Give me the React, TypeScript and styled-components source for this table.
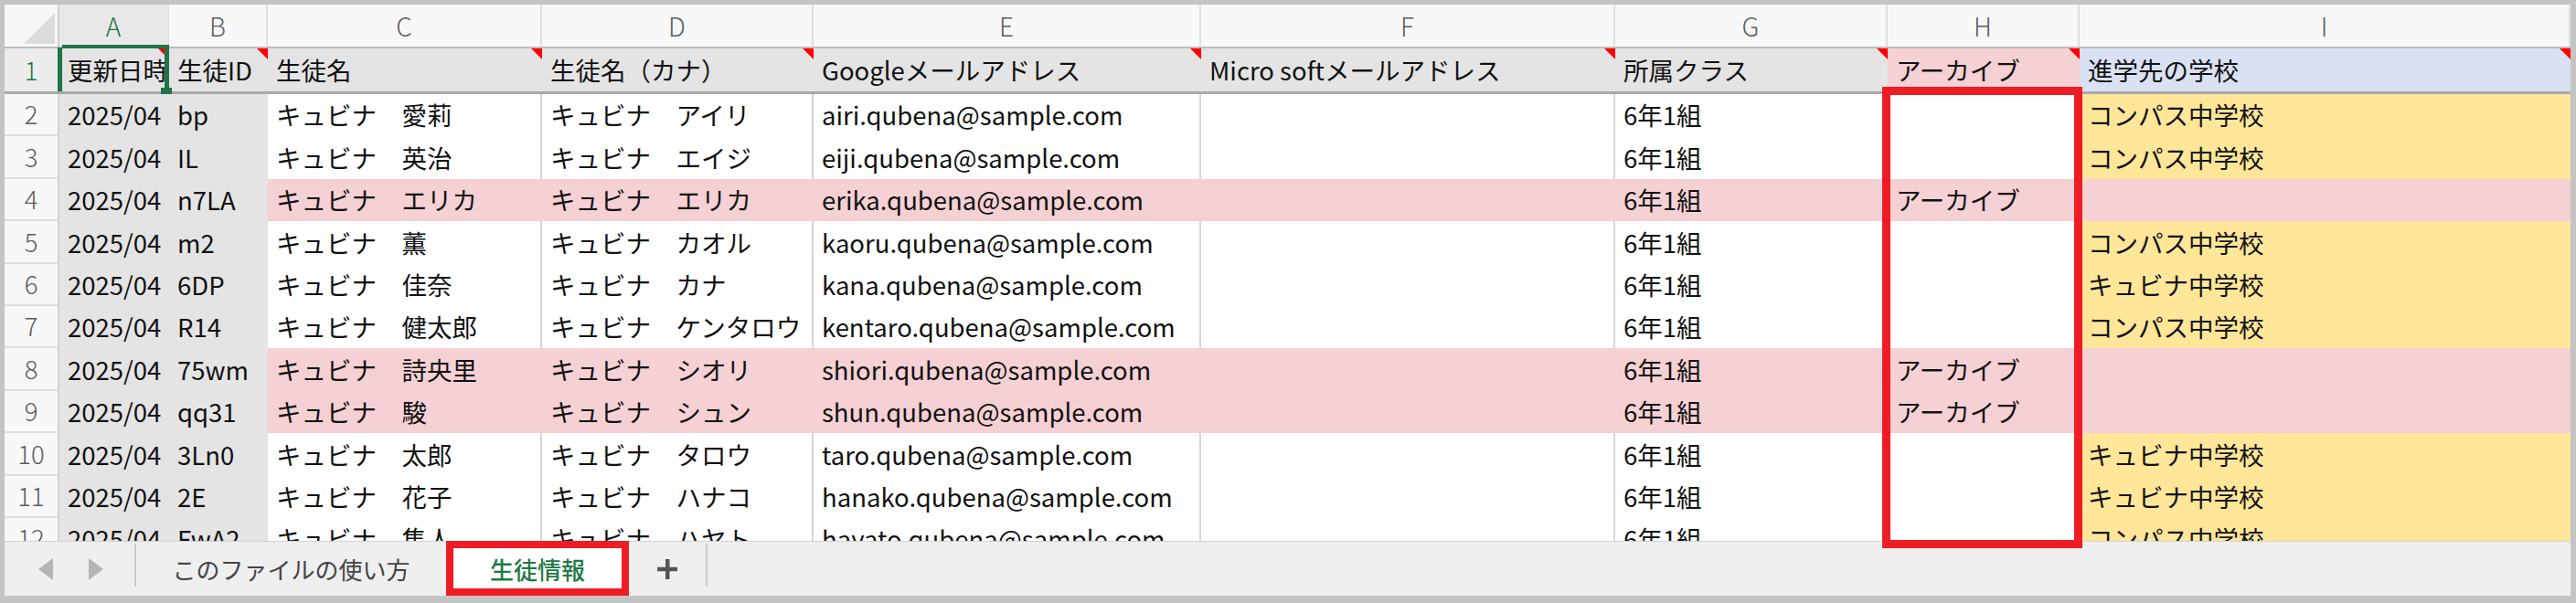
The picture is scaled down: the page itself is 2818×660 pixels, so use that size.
import React from 'react';
import styled, { createGlobalStyle } from 'styled-components';

const GlobalStyle = createGlobalStyle`
  html, body { margin: 0; padding: 0; background: #ffffff; }
  body { font-family: "Noto Sans CJK JP", "Noto Sans", sans-serif; }
  #root { width: 2818px; height: 660px; }
`;

const COLS = [60, 120, 108, 300, 297, 424, 453, 298, 210, 537];
const TEMPLATE = COLS.map((c) => `${c}px`).join(' ');

const GRAY = '#e4e4e4';
const PINK = '#f5d0d4';
const YELLOW = '#ffe699';
const BLUE = '#dae1f3';
const GRID = '#d6d6d6';
const GREEN = '#217346';
const RED_MARK = '#ee1c25';

const Page = styled.div`
  position: relative;
  width: 2818px;
  height: 660px;
`;

const Frame = styled.div`
  box-sizing: border-box;
  width: 100%;
  height: 100%;
  border: 5px solid #c4c4c4;
  border-right-width: 6px;
  border-bottom-width: 8px;
  display: flex;
  flex-direction: column;
  overflow: hidden;
  background: #ffffff;
`;

const Sheet = styled.div`
  flex: 1;
  min-height: 0;
  overflow: hidden;
  display: flex;
  flex-direction: column;
`;

const GridRow = styled.div<{ $h: number; $bottom: string; $bw: number }>`
  display: grid;
  grid-template-columns: ${TEMPLATE};
  height: ${(p) => p.$h}px;
  flex: none;
  box-sizing: border-box;
  border-bottom: ${(p) => p.$bw}px solid ${(p) => p.$bottom};
`;

const Corner = styled.div`
  position: relative;
  background: #f7f7f7;
  border-right: 2px solid #d2d2d2;
  &::after {
    content: '';
    position: absolute;
    right: 3px;
    bottom: 3px;
    width: 0;
    height: 0;
    border-bottom: 34px solid #dcdcdc;
    border-left: 34px solid transparent;
  }
`;

const ColHead = styled.div<{ $sel?: boolean }>`
  position: relative;
  box-sizing: border-box;
  display: flex;
  align-items: center;
  justify-content: center;
  background: ${(p) => (p.$sel ? '#e8e8e8' : '#f8f8f8')};
  border-right: 2px solid #e0e0e0;
  color: ${(p) => (p.$sel ? GREEN : '#5c5c5c')};
  font-size: 28px;
  font-weight: 300;
  line-height: 1;
  &::after {
    content: '';
    display: ${(p) => (p.$sel ? 'block' : 'none')};
    position: absolute;
    left: 3px;
    right: -2px;
    bottom: -2px;
    height: 4px;
    background: ${GREEN};
  }
`;

const RowHead = styled.div<{ $sel?: boolean; $line?: boolean }>`
  box-sizing: border-box;
  display: flex;
  align-items: center;
  justify-content: center;
  background: ${(p) => (p.$sel ? '#ececec' : '#f8f8f8')};
  border-right: 2px solid #d2d2d2;
  border-bottom: ${(p) => (p.$line ? '2px solid #dedede' : 'none')};
  color: ${(p) => (p.$sel ? GREEN : '#5c5c5c')};
  font-size: 27.5px;
  font-weight: 300;
  line-height: 1;
`;

const Cell = styled.div<{ $bg?: string }>`
  position: relative;
  box-sizing: border-box;
  display: flex;
  align-items: center;
  padding-left: 9px;
  background: ${(p) => p.$bg || '#ffffff'};
  border-right: 2px solid ${(p) => p.$bg || GRID};
  color: #111111;
  font-size: 27.5px;
  line-height: 1;
  white-space: nowrap;
  overflow: hidden;
`;

const DataCell = styled(Cell)`
  margin-bottom: -2px;
  border-bottom: 2px solid ${(p) => p.$bg || GRID};
`;

const TitleCell = styled(Cell)`
  overflow: visible;
  &::after {
    content: '';
    position: absolute;
    top: 0;
    right: -2px;
    width: 0;
    height: 0;
    border-top: 12px solid #ff0000;
    border-left: 12px solid transparent;
  }
`;

const Selection = styled.div`
  position: absolute;
  z-index: 3;
  left: -2px;
  right: -2px;
  top: -1px;
  bottom: 0;
  border-left: 5px solid ${GREEN};
  border-right: 5px solid ${GREEN};
  pointer-events: none;
`;

const FillHandle = styled.div`
  position: absolute;
  z-index: 4;
  right: -5px;
  bottom: -3px;
  width: 12px;
  height: 7px;
  background: ${GREEN};
`;

const TabBar = styled.div`
  box-sizing: border-box;
  height: 60px;
  flex: none;
  display: flex;
  align-items: stretch;
  background: #efefef;
  border-top: 1px solid #d2d2d2;
`;

const Nav = styled.div`
  width: 142px;
  display: flex;
  align-items: center;
  gap: 39px;
  padding-left: 37px;
  box-sizing: border-box;
`;

const Sep = styled.div`
  width: 2px;
  height: 47px;
  margin-top: 2px;
  background: #c9c9c9;
  flex: none;
`;

const Tab = styled.div<{ $active?: boolean; $w: number }>`
  width: ${(p) => p.$w}px;
  flex: none;
  display: flex;
  align-items: center;
  justify-content: center;
  background: ${(p) => (p.$active ? '#ffffff' : 'transparent')};
  color: ${(p) => (p.$active ? '#1f7a45' : '#444444')};
  font-size: 26px;
  font-weight: ${(p) => (p.$active ? 500 : 400)};
  line-height: 1;
`;

const AddTab = styled.div`
  width: 84px;
  flex: none;
  display: flex;
  align-items: center;
  justify-content: center;
`;

const Mark = styled.div<{ $x: number; $y: number; $w: number; $h: number; $b: number }>`
  position: absolute;
  z-index: 10;
  box-sizing: border-box;
  left: ${(p) => p.$x}px;
  top: ${(p) => p.$y}px;
  width: ${(p) => p.$w}px;
  height: ${(p) => p.$h}px;
  border: ${(p) => p.$b}px solid ${RED_MARK};
  pointer-events: none;
`;

type Row = {
  n: number;
  id: string;
  name: string;
  kana: string;
  mail: string;
  school?: string;
  archive?: boolean;
};

const ROWS: Row[] = [
  { n: 2, id: 'bp', name: 'キュビナ　愛莉', kana: 'キュビナ　アイリ', mail: 'airi', school: 'コンパス中学校' },
  { n: 3, id: 'IL', name: 'キュビナ　英治', kana: 'キュビナ　エイジ', mail: 'eiji', school: 'コンパス中学校' },
  { n: 4, id: 'n7LA', name: 'キュビナ　エリカ', kana: 'キュビナ　エリカ', mail: 'erika', archive: true },
  { n: 5, id: 'm2', name: 'キュビナ　薫', kana: 'キュビナ　カオル', mail: 'kaoru', school: 'コンパス中学校' },
  { n: 6, id: '6DP', name: 'キュビナ　佳奈', kana: 'キュビナ　カナ', mail: 'kana', school: 'キュビナ中学校' },
  { n: 7, id: 'R14', name: 'キュビナ　健太郎', kana: 'キュビナ　ケンタロウ', mail: 'kentaro', school: 'コンパス中学校' },
  { n: 8, id: '75wm', name: 'キュビナ　詩央里', kana: 'キュビナ　シオリ', mail: 'shiori', archive: true },
  { n: 9, id: 'qq31', name: 'キュビナ　駿', kana: 'キュビナ　シュン', mail: 'shun', archive: true },
  { n: 10, id: '3Ln0', name: 'キュビナ　太郎', kana: 'キュビナ　タロウ', mail: 'taro', school: 'キュビナ中学校' },
  { n: 11, id: '2E', name: 'キュビナ　花子', kana: 'キュビナ　ハナコ', mail: 'hanako', school: 'キュビナ中学校' },
  { n: 12, id: 'FwA2', name: 'キュビナ　隼人', kana: 'キュビナ　ハヤト', mail: 'hayato', school: 'コンパス中学校' },
];

const LETTERS = ['A', 'B', 'C', 'D', 'E', 'F', 'G', 'H', 'I'];
const TITLES = [
  '更新日時',
  '生徒ID',
  '生徒名',
  '生徒名（カナ）',
  'Googleメールアドレス',
  'Micro softメールアドレス',
  '所属クラス',
  'アーカイブ',
  '進学先の学校',
];
const TITLE_BG = [GRAY, GRAY, GRAY, GRAY, GRAY, GRAY, GRAY, PINK, BLUE];

const Arrow = ({ dir }: { dir: 'left' | 'right' }) => (
  <svg width="16" height="24" viewBox="0 0 16 24">
    {dir === 'left' ? (
      <polygon points="16,0 16,24 0,12" fill="#b5b5b5" />
    ) : (
      <polygon points="0,0 0,24 16,12" fill="#b5b5b5" />
    )}
  </svg>
);

const Plus = () => (
  <svg width="24" height="24" viewBox="0 0 24 24">
    <rect x="10" y="1" width="4.5" height="22" fill="#555555" />
    <rect x="1" y="9.75" width="22" height="4.5" fill="#555555" />
  </svg>
);

export default function App() {
  return (
    <Page>
      <GlobalStyle />
      <Frame>
        <Sheet>
          <GridRow $h={48} $bottom="#bcbcbc" $bw={2}>
            <Corner />
            {LETTERS.map((l, i) => (
              <ColHead key={l} $sel={i === 0}>
                {l}
              </ColHead>
            ))}
          </GridRow>
          <GridRow $h={50} $bottom="#a9a9a9" $bw={3}>
            <RowHead $sel>1</RowHead>
            {TITLES.map((t, i) => (
              <TitleCell key={t} $bg={TITLE_BG[i]}>
                {t}
                {i === 0 && (
                  <>
                    <Selection />
                    <FillHandle />
                  </>
                )}
              </TitleCell>
            ))}
          </GridRow>
          {ROWS.map((r) => {
            const fill = r.archive ? PINK : undefined;
            return (
              <GridRow key={r.n} $h={46.4} $bottom="transparent" $bw={0}>
                <RowHead $line>{r.n}</RowHead>
                <DataCell $bg={GRAY}>2025/04</DataCell>
                <DataCell $bg={GRAY}>{r.id}</DataCell>
                <DataCell $bg={fill}>{r.name}</DataCell>
                <DataCell $bg={fill}>{r.kana}</DataCell>
                <DataCell $bg={fill}>{`${r.mail}.qubena@sample.com`}</DataCell>
                <DataCell $bg={fill} />
                <DataCell $bg={fill}>6年1組</DataCell>
                <DataCell $bg={fill}>{r.archive ? 'アーカイブ' : ''}</DataCell>
                <DataCell $bg={r.archive ? PINK : YELLOW}>{r.school || ''}</DataCell>
              </GridRow>
            );
          })}
        </Sheet>
        <TabBar>
          <Nav>
            <Arrow dir="left" />
            <Arrow dir="right" />
          </Nav>
          <Sep />
          <Tab $w={339}>このファイルの使い方</Tab>
          <Tab $w={200} $active>
            生徒情報
          </Tab>
          <AddTab>
            <Plus />
          </AddTab>
          <Sep />
        </TabBar>
      </Frame>
      <Mark $x={2059} $y={95} $w={219} $h={505} $b={9} />
      <Mark $x={488} $y={592} $w={200} $h={60} $b={8} />
    </Page>
  );
}
